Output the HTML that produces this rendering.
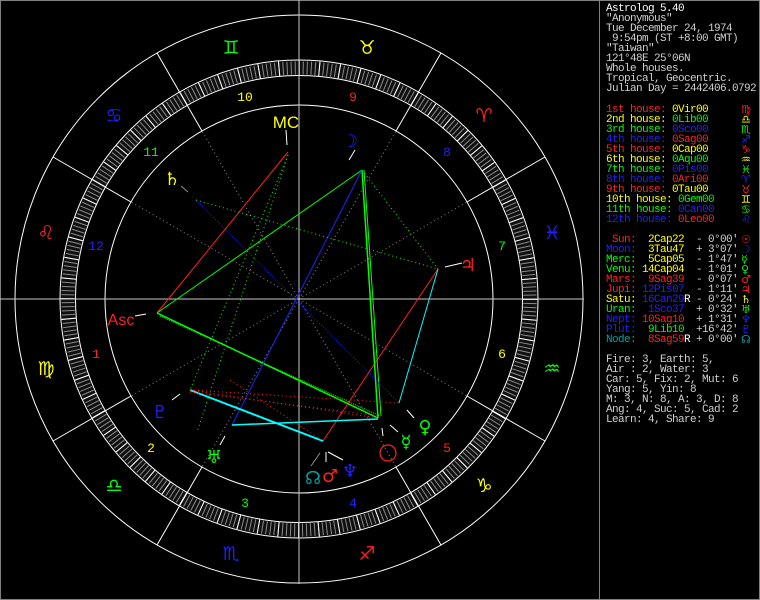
<!DOCTYPE html>
<html><head><meta charset="utf-8"><style>
html,body{margin:0;padding:0;background:#000;}
body{width:760px;height:600px;position:relative;overflow:hidden;}
svg{position:absolute;left:0;top:0;}
.p{position:absolute;left:606px;font-family:"Liberation Mono","DejaVu Sans Mono",monospace;font-size:11px;letter-spacing:-0.6px;line-height:10px;white-space:pre;color:#fff;}
.r{color:#ff2020}.y{color:#ffff00}.g{color:#00ff00}.b{color:#2020ff}.c{color:#00a0a0}.w{color:#fff}.l{color:#d0d0d0}
.gl{position:absolute;left:741px;font-family:"DejaVu Sans",sans-serif;font-size:11px;line-height:10px;}
</style></head><body>
<svg width="760" height="600" viewBox="0 0 760 600" font-family="DejaVu Sans, sans-serif">
<rect x="0.5" y="0.5" width="759" height="599" fill="none" stroke="#808080"/>
<line x1="599.5" y1="0" x2="599.5" y2="600" stroke="#808080"/>
<g transform="translate(299,299)">
 <g stroke="#909090" stroke-dasharray="1 3">
  <line x1="0" y1="0" x2="194" y2="0" transform="rotate(-30)"/>
  <line x1="0" y1="0" x2="194" y2="0" transform="rotate(-60)"/>
  <line x1="0" y1="0" x2="194" y2="0" transform="rotate(-120)"/>
  <line x1="0" y1="0" x2="194" y2="0" transform="rotate(-150)"/>
  <line x1="0" y1="0" x2="194" y2="0" transform="rotate(-210)"/>
  <line x1="0" y1="0" x2="194" y2="0" transform="rotate(-240)"/>
  <line x1="0" y1="0" x2="194" y2="0" transform="rotate(-300)"/>
  <line x1="0" y1="0" x2="194" y2="0" transform="rotate(-330)"/>
 </g>
 <circle r="231" fill="none" stroke="#101010" stroke-width="15"/>
 <circle r="231" fill="none" stroke="#8a8a8a" stroke-width="13" stroke-dasharray="1 3.03"/>
 <circle r="231" fill="none" stroke="#ffffff" stroke-width="15" stroke-dasharray="1 19.15"/>
 <circle r="223.5" fill="none" stroke="#fff"/>
 <circle r="239" fill="none" stroke="#fff"/>
 <circle r="194" fill="none" stroke="#fff"/>
 <circle r="284" fill="none" stroke="#fff"/>
 <g stroke="#fff">
  <line x1="194" y1="0" x2="284" y2="0" transform="rotate(-30)"/>
  <line x1="194" y1="0" x2="284" y2="0" transform="rotate(-60)"/>
  <line x1="194" y1="0" x2="284" y2="0" transform="rotate(-120)"/>
  <line x1="194" y1="0" x2="284" y2="0" transform="rotate(-150)"/>
  <line x1="194" y1="0" x2="284" y2="0" transform="rotate(-210)"/>
  <line x1="194" y1="0" x2="284" y2="0" transform="rotate(-240)"/>
  <line x1="194" y1="0" x2="284" y2="0" transform="rotate(-300)"/>
  <line x1="194" y1="0" x2="284" y2="0" transform="rotate(-330)"/>
 </g>
</g>
<line x1="0" y1="299" x2="584" y2="299" stroke="#c8c8c8"/>
<line x1="299" y1="0" x2="299" y2="584" stroke="#c8c8c8"/>

<g fill="none">
 <line x1="157" y1="313" x2="288" y2="152" stroke="#ff2020"/>
 <line x1="438" y1="269" x2="323" y2="441" stroke="#ff2020"/>
 <line x1="157" y1="313" x2="362" y2="170" stroke="#00ff00"/>
 <line x1="157" y1="313" x2="378" y2="418" stroke="#00ff00" stroke-width="1.5"/>
 <line x1="160" y1="316" x2="380" y2="416" stroke="#00ff00" stroke-dasharray="1 1"/>
 <line x1="362" y1="170" x2="378" y2="418" stroke="#00ff00" stroke-width="1.5"/>
 <line x1="364" y1="170" x2="381" y2="416" stroke="#00ff00"/>
 <line x1="362" y1="170" x2="232" y2="425" stroke="#2020ff"/>
 <line x1="196" y1="200" x2="399" y2="403" stroke="#2020ff" stroke-dasharray="1 2"/>
 <line x1="196" y1="200" x2="438" y2="269" stroke="#00ff00" stroke-dasharray="1 3"/>
 <line x1="288" y1="155" x2="190" y2="390" stroke="#00ff00" stroke-dasharray="1 3"/>
 <line x1="288" y1="155" x2="197" y2="432" stroke="#00ff00" stroke-dasharray="1 3"/>
 <line x1="438" y1="269" x2="399" y2="403" stroke="#00ffff"/>
 <line x1="190" y1="390" x2="323" y2="441" stroke="#00ffff" stroke-width="2"/>
 <line x1="232" y1="425" x2="378" y2="419" stroke="#00ffff" stroke-width="1.5"/>
 <line x1="190" y1="390" x2="399" y2="403" stroke="#ff2020" stroke-dasharray="1 3"/>
 <line x1="190" y1="390" x2="378" y2="418" stroke="#ff2020" stroke-dasharray="1 3"/>
 <line x1="190" y1="392" x2="381" y2="416" stroke="#ff2020" stroke-dasharray="1 3"/>
 <line x1="230" y1="380" x2="323" y2="441" stroke="#ff2020" stroke-dasharray="1 3"/>
 <line x1="362" y1="170" x2="438" y2="269" stroke="#00ff00" stroke-dasharray="1 3"/>
</g>
<g stroke="#fff">
 <line x1="286" y1="130" x2="287" y2="145"/>
 <line x1="355" y1="150" x2="349" y2="160"/>
 <line x1="445" y1="267" x2="462" y2="263"/>
 <line x1="135" y1="316" x2="146" y2="314"/>
 <line x1="172" y1="400" x2="180" y2="394"/>
 <line x1="220" y1="445" x2="225" y2="436"/>
 <line x1="326" y1="462" x2="326" y2="452"/>
 <line x1="328" y1="452" x2="343" y2="460"/>
 <line x1="383" y1="436" x2="382" y2="428"/>
 <line x1="390" y1="425" x2="398" y2="432"/>
 <line x1="407" y1="410" x2="414" y2="418"/>
</g>
<line x1="181" y1="186" x2="188" y2="192" stroke="#909090"/>
<line x1="311" y1="466" x2="320" y2="453" stroke="#909090"/>

<g font-family="Liberation Mono, monospace" font-size="13" text-anchor="middle">
 <text x="96" y="358" fill="#ff2020">1</text>
 <text x="151" y="452" fill="#ffff00">2</text>
 <text x="245" y="507" fill="#00ff00">3</text>
 <text x="353" y="507" fill="#2020ff">4</text>
 <text x="447" y="452" fill="#ff2020">5</text>
 <text x="502" y="358" fill="#ffff00">6</text>
 <text x="502" y="250" fill="#00ff00">7</text>
 <text x="447" y="156" fill="#2020ff">8</text>
 <text x="353" y="101" fill="#ff2020">9</text>
 <text x="245" y="101" fill="#ffff00">10</text>
 <text x="151" y="156" fill="#00ff00">11</text>
 <text x="96" y="250" fill="#2020ff">12</text>
</g>
<g font-size="19" text-anchor="middle">
 <text x="46" y="375" fill="#ffff00">♍&#xFE0E;</text>
 <text x="114" y="492" fill="#00ff00">♎&#xFE0E;</text>
 <text x="231" y="560" fill="#2020ff">♏&#xFE0E;</text>
 <text x="367" y="560" fill="#ff2020">♐&#xFE0E;</text>
 <text x="484" y="492" fill="#ffff00">♑&#xFE0E;</text>
 <text x="552" y="375" fill="#00ff00">♒&#xFE0E;</text>
 <text x="552" y="239" fill="#2020ff">♓&#xFE0E;</text>
 <text x="484" y="122" fill="#ff2020">♈&#xFE0E;</text>
 <text x="367" y="54" fill="#ffff00">♉&#xFE0E;</text>
 <text x="231" y="54" fill="#00ff00">♊&#xFE0E;</text>
 <text x="114" y="122" fill="#2020ff">♋&#xFE0E;</text>
 <text x="46" y="239" fill="#ff2020">♌&#xFE0E;</text>
</g>
<g font-size="18" text-anchor="middle">
 <text x="286" y="128" fill="#ffff00" font-family="Liberation Sans Narrow, Liberation Sans, sans-serif" font-size="17">MC</text>
 <text x="121" y="325" fill="#ff2020" font-family="Liberation Sans Narrow, Liberation Sans, sans-serif" font-size="16">Asc</text>
 <text x="350" y="147" fill="#2020ff">☽&#xFE0E;</text>
 <text x="172" y="185" fill="#ffff00">♄&#xFE0E;</text>
 <text x="468" y="271" fill="#ff2020">♃&#xFE0E;</text>
 <text x="160" y="418" fill="#2020ff">♇&#xFE0E;</text>
 <text x="214" y="463" fill="#00ff00">♅&#xFE0E;</text>
 <text x="313" y="484" fill="#00a0a0">☊&#xFE0E;</text>
 <text x="330" y="482" fill="#ff2020">♂&#xFE0E;</text>
 <text x="350" y="477" fill="#2020ff">♆&#xFE0E;</text>
 <text x="406" y="448" fill="#00ff00">☿&#xFE0E;</text>
 <text x="425" y="433" fill="#00ff00">♀&#xFE0E;</text>
</g>
<circle cx="388" cy="453" r="8" fill="none" stroke="#ff2020" stroke-width="1.2"/>
</svg>

<div class="p" style="top:4px">Astrolog 5.40
<span class="l">"Anonymous"
Tue December 24, 1974
 9:54pm (ST +8:00 GMT)
"Taiwan"
121°48E 25°06N
Whole houses.
Tropical, Geocentric.
Julian Day = 2442406.0792</span></div>

<div class="p" style="top:105px"><span class="r">1st house: </span><span class="y">0Vir00</span>
<span class="y">2nd house: </span><span class="g">0Lib00</span>
<span class="g">3rd house: </span><span class="b">0Sco00</span>
<span class="b">4th house: </span><span class="r">0Sag00</span>
<span class="r">5th house: </span><span class="y">0Cap00</span>
<span class="y">6th house: </span><span class="g">0Aqu00</span>
<span class="g">7th house: </span><span class="b">0Pis00</span>
<span class="b">8th house: </span><span class="r">0Ari00</span>
<span class="r">9th house: </span><span class="y">0Tau00</span>
<span class="y">10th house: </span><span class="g">0Gem00</span>
<span class="g">11th house: </span><span class="b">0Can00</span>
<span class="b">12th house: </span><span class="r">0Leo00</span></div>
<div class="gl" style="top:105px"><span class="r">♍&#xFE0E;</span><br><span class="y">♎&#xFE0E;</span><br><span class="g">♏&#xFE0E;</span><br><span class="b">♐&#xFE0E;</span><br><span class="r">♑&#xFE0E;</span><br><span class="y">♒&#xFE0E;</span><br><span class="g">♓&#xFE0E;</span><br><span class="b">♈&#xFE0E;</span><br><span class="r">♉&#xFE0E;</span><br><span class="y">♊&#xFE0E;</span><br><span class="g">♋&#xFE0E;</span><br><span class="b">♌&#xFE0E;</span></div>

<div class="p" style="top:235px"><span class="r"> Sun: </span><span class="y"> 2Cap22 </span><span class="l"> - 0°00'</span>
<span class="b">Moon: </span><span class="y"> 3Tau47 </span><span class="l"> + 3°07'</span>
<span class="g">Merc: </span><span class="y"> 5Cap05 </span><span class="l"> - 1°47'</span>
<span class="g">Venu: </span><span class="y">14Cap04 </span><span class="l"> - 1°01'</span>
<span class="r">Mars: </span><span class="r"> 9Sag39 </span><span class="l"> - 0°07'</span>
<span class="r">Jupi: </span><span class="b">12Pis07 </span><span class="l"> - 1°11'</span>
<span class="y">Satu: </span><span class="b">16Can29</span><span class="w">R</span><span class="l"> - 0°24'</span>
<span class="g">Uran: </span><span class="b"> 1Sco37 </span><span class="l"> + 0°32'</span>
<span class="b">Nept: </span><span class="r">10Sag10 </span><span class="l"> + 1°31'</span>
<span class="b">Plut: </span><span class="g"> 9Lib10 </span><span class="l"> +16°42'</span>
<span class="c">Node: </span><span class="r"> 8Sag59</span><span class="w">R</span><span class="l"> + 0°00'</span></div>
<div class="gl" style="top:235px"><span class="r">☉&#xFE0E;</span><br><span class="b">☽&#xFE0E;</span><br><span class="g">☿&#xFE0E;</span><br><span class="g">♀&#xFE0E;</span><br><span class="r">♂&#xFE0E;</span><br><span class="r">♃&#xFE0E;</span><br><span class="y">♄&#xFE0E;</span><br><span class="g">♅&#xFE0E;</span><br><span class="b">♆&#xFE0E;</span><br><span class="b">♇&#xFE0E;</span><br><span class="c">☊&#xFE0E;</span></div>

<div class="p l" style="top:355px">Fire: 3, Earth: 5,
Air : 2, Water: 3
Car: 5, Fix: 2, Mut: 6
Yang: 5, Yin: 8
M: 3, N: 8, A: 3, D: 8
Ang: 4, Suc: 5, Cad: 2
Learn: 4, Share: 9</div>
</body></html>
